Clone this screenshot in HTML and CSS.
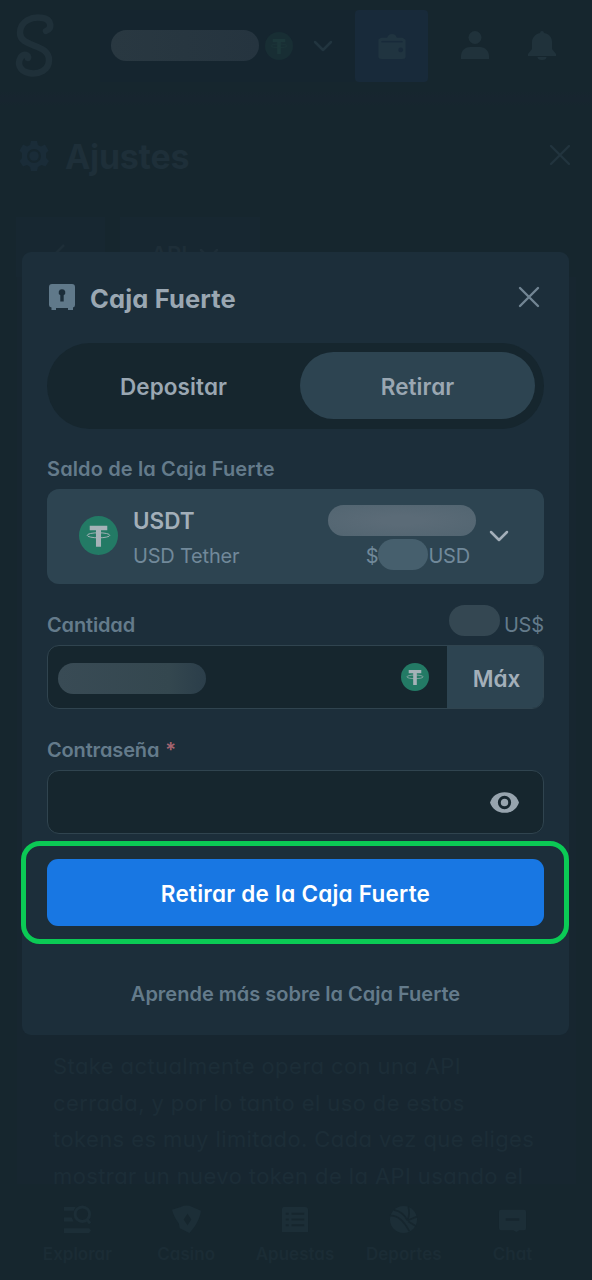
FILE: index.html
```html
<!DOCTYPE html>
<html lang="es">
<head>
<meta charset="utf-8">
<title>Caja Fuerte</title>
<link rel="stylesheet" href="styles.css">
</head>
<body>
<svg width="0" height="0" class="defs" aria-hidden="true">
  <symbol id="tether" viewBox="0 0 40 40">
    <circle cx="20" cy="20" r="20" fill="var(--coin)"/>
    <path d="M11 10h18v4.600h-6.400v17h-5.200v-17H11z" fill="var(--mark)"/>
    <ellipse cx="20" cy="19.800" rx="11.600" ry="2.600" fill="none" stroke="var(--mark)" stroke-width="1"/>
  </symbol>
  <symbol id="cross" viewBox="0 0 22 22"><path d="M2 2l18 18M20 2L2 20" fill="none" stroke="currentColor" stroke-width="2.400" stroke-linecap="round"/></symbol>
  <symbol id="chevron" viewBox="0 0 20 12"><path d="M2 2l8 8 8-8" fill="none" stroke="currentColor" stroke-width="2.500" stroke-linecap="round" stroke-linejoin="round"/></symbol>
</svg>
<div class="app">
  <header class="topbar">
    <svg class="logo" viewBox="0 0 40 64"><path d="M31 17C38 15 36 5 28 4C17 2 5 7 5 19C5 34 34 29 34 46C34 56 24 61 14 59C4 57 2 49 6 43C9 39 14 41 13 44" fill="none" stroke="currentColor" stroke-width="6.500" stroke-linecap="round"/></svg>
    <div class="balance">
      <span class="mask mask-top"></span>
      <svg class="coin-dim"><use href="#tether"/></svg>
      <svg class="chev-dim"><use href="#chevron"/></svg>
    </div>
    <div class="wallet"><svg viewBox="0 0 30 28"><path d="M1 6.500L4 5h6q1-4 5-4t5 4h6l3 2v18q0 2-3 2H4q-3 0-3-2z" fill="currentColor"/><path d="M4 9h22" stroke="#182a3a" stroke-width="1.500"/><circle cx="24" cy="17.500" r="2.500" fill="#182a3a"/></svg></div>
    <svg class="user" viewBox="0 0 28 28"><circle cx="14" cy="6.500" r="6.500" fill="currentColor"/><path d="M0 28v-3c0-6 5-9 9-9h10c5 0 9 4 9 9v3z" fill="currentColor"/></svg>
    <svg class="bell" viewBox="0 0 28 29"><path d="M12 2a2 2 0 0 1 4 0c6 1 8 5 8 9v7l4 5v2H0v-2l4-5v-7c0-4 3-8 8-9zM9.500 26h9a4.500 3 0 0 1-9 0z" fill="currentColor"/></svg>
  </header>
  <div class="settings">
    <svg class="gear" viewBox="0 0 30 30"><path d="M12 0h6l1 4 3 1.500 4-2 3.500 6L27 12v5l3 3-3.500 5.500-4-1.500-3.500 2-1 4h-6l-1-4-3-2-4 1.500L.5 20 3 17v-5L.5 9.500 4 3.500l4 2L11 4z" fill="currentColor"/><circle cx="15" cy="15" r="7" fill="#16262e"/><circle cx="15" cy="15" r="4.800" fill="currentColor"/></svg>
    <h1>Ajustes</h1>
    <svg class="settings-x"><use href="#cross"/></svg>
  </div>
  <div class="tabs"><div class="tab tab-back"><svg viewBox="0 0 12 20"><path d="M10 2l-8 8 8 8" fill="none" stroke="currentColor" stroke-width="2.500"/></svg></div><div class="tab tab-api"><span>API</span><svg><use href="#chevron"/></svg></div></div>
  <section class="panel">
    <p>Stake actualmente opera con una API<br>cerrada, y por lo tanto el uso de estos<br>tokens es muy limitado. Cada vez que eliges<br>mostrar un nuevo token de la API usando el</p>
  </section>
  <nav class="bottom">
    <div class="item"><svg viewBox="0 0 30 30"><path d="M1 2h12l-2 4H1zM1 13h8l2 4H1zM1 24h26l2 2.500-2 2.500H1z" fill="currentColor"/><circle cx="20" cy="9.500" r="7.500" fill="none" stroke="currentColor" stroke-width="3"/><path d="M24.500 14.500L28 19" stroke="currentColor" stroke-width="3"/></svg><span>Explorar</span></div>
    <div class="item"><svg viewBox="0 0 30 30"><path d="M0 5l9-3q6-3 12 0l9 4q-1 8-7 17l-5 6-10-5-1-5Q2 13 0 5z" fill="currentColor"/><path d="M16 9l4 6-4 6-4-6z" fill="#16262e"/></svg><span>Casino</span></div>
    <div class="item"><svg viewBox="0 0 30 30"><path d="M4 2h22q3 0 3 3v23H2V5q0-3 2-3z" fill="currentColor"/><path d="M6 9h3m3 0h13M6 15h3m3 0h13M6 21h3m3 0h13" stroke="#16262e" stroke-width="2"/></svg><span>Apuestas</span></div>
    <div class="item"><svg viewBox="0 0 30 30"><circle cx="15" cy="15" r="14" fill="currentColor"/><path d="M1 11q11-1 20 16M5 5q10 2 14 11M19 16q3-7 1-14M19 16l10-4M20 17l8 5" fill="none" stroke="#16262e" stroke-width="1.800"/></svg><span>Deportes</span></div>
    <div class="item"><svg viewBox="0 0 30 30"><path d="M3 5h24q2 0 2 2v17q0 2-2 2h-5l-3 2-3-2H3q-2 0-2-2V7q0-2 2-2z" fill="currentColor"/><path d="M8 15h14" stroke="#16262e" stroke-width="2.500"/></svg><span>Chat</span></div>
  </nav>
</div>

<main class="modal">
  <div class="modal-head">
    <svg class="safe" viewBox="0 0 26 26"><path d="M3 0h20q3 0 3 3v18q0 2-2 2.500V26h-5v-2H7v2H2.500v-2.500Q0 23 0 21V3q0-3 3-3z" fill="#60798a"/><path d="M13 5.200a3.200 3.200 0 0 1 1.700 6V17.500h-3.400v-6.300A3.200 3.200 0 0 1 13 5.200z" fill="#1c2e3a"/></svg>
    <h2>Caja Fuerte</h2>
    <svg class="close"><use href="#cross"/></svg>
  </div>
  <div class="switch"><div class="opt">Depositar</div><div class="opt active">Retirar</div></div>
  <div class="label l-saldo"><span>Saldo de la Caja Fuerte</span></div>
  <div class="currency">
    <svg class="coin"><use href="#tether"/></svg>
    <div class="names"><strong>USDT</strong><span>USD Tether</span></div>
    <div class="amounts"><span class="mask mask-amt"></span><div class="usd"><span>$</span><span class="mask mask-usd"></span><span>USD</span></div></div>
    <svg class="chev"><use href="#chevron"/></svg>
  </div>
  <div class="label l-cant"><span>Cantidad</span><div class="fiat"><span class="mask mask-fiat"></span><span>US$</span></div></div>
  <div class="field amount"><span class="mask mask-in"></span><svg class="coin-sm"><use href="#tether"/></svg><div class="max"><span>Máx</span></div></div>
  <div class="label l-pass"><span>Contraseña</span><span class="star">*</span></div>
  <div class="field pass"><svg viewBox="0 0 28 20"><path d="M14 0C21 0 26 4 28 10c-2 6-7 10-14 10S2 16 0 10C2 4 7 0 14 0z" fill="#97a4ae"/><circle cx="14" cy="10" r="5" fill="none" stroke="#16262e" stroke-width="2.800"/></svg></div>
  <div class="submit"><span>Retirar de la Caja Fuerte</span><div class="ring"></div></div>
  <div class="learn"><span>Aprende más sobre la Caja Fuerte</span></div>
</main>
</body>
</html>
```
FILE: styles.css
```css
* { box-sizing: border-box; }
body { margin: 0; width: 592px; height: 1280px; overflow: hidden; position: relative; background: #16262e; font-family: Inter, "Open Sans", sans-serif; font-feature-settings: "cv11"; color: #9aa7b2; --coin: #237a65; --mark: #a5b2b8; }
svg { display: block; flex: none; }
.defs { position: absolute; }
span, h1, h2, strong { white-space: nowrap; }
.mask { display: block; flex: none; height: 31px; border-radius: 16px; }

.app { height: 1280px; display: flex; flex-direction: column; }
.topbar { height: 105px; flex: none; display: flex; align-items: flex-start; color: #20313a; background: linear-gradient(#16262e 0 90px, #17252f 98px 102px, #16262e); }
.logo { width: 40px; height: 64px; margin: 14px 0 0 15px; color: #1f3039; }
.balance { width: 255px; height: 72px; margin: 10px 0 0 45px; padding-left: 11px; display: flex; align-items: center; background: #15252f; }
.mask-top { width: 148px; margin-top: -2px; background: linear-gradient(90deg, #293841, #25343f); }
.coin-dim { width: 28px; height: 28px; margin-left: 6px; --coin: #182e34; --mark: #1c373a; }
.chev-dim { width: 20px; height: 12px; margin-left: 20px; color: #22353f; }
.wallet { width: 73px; height: 72px; margin-top: 10px; padding: 23px 0 0 22px; background: #182a3a; border-radius: 4px; color: #203440; }
.wallet svg { width: 30px; height: 27px; }
.user { width: 28px; height: 28px; margin: 31px 0 0 33px; color: #20323b; }
.bell { width: 28px; height: 29px; margin: 31px 0 0 39px; color: #20323b; }
.settings { height: 112px; flex: none; display: flex; padding: 36px 21px 0 19px; color: #1d2e39; }
.gear { width: 30px; height: 30px; color: #1a2c38; }
.settings h1 { margin: -5px 0 0 16px; font-size: 34px; line-height: 42px; font-weight: 700; letter-spacing: -.3px; color: #1e2f39; }
.settings-x { width: 22px; height: 22px; margin: 3px 0 0 auto; color: #22343e; }
.tabs { height: 60px; flex: none; display: flex; gap: 15px; padding-left: 16px; }
.tab { height: 60px; background: #172731; display: flex; color: #1e2e38; }
.tab-back { width: 89px; padding: 26px 0 0 38px; }
.tab-back svg { width: 12px; height: 20px; }
.tab-api { width: 140px; padding: 24px 0 0 31px; gap: 12px; font-size: 22px; line-height: 26px; font-weight: 600; }
.tab-api svg { width: 20px; height: 12px; margin-top: 7px; }
.panel { flex: 1; margin: 0 16px 0 17px; padding: 771px 0 0 36px; background: linear-gradient(#172630, #172630) no-repeat 0 0 / 100% calc(100% - 12px); }
.panel p { margin: 0; font-size: 22px; line-height: 36.600px; letter-spacing: .4px; white-space: nowrap; color: #1c2d37; }
.bottom { height: 84px; flex: none; display: flex; padding: 9px 25px 0 23px; color: #1c2e37; }
.item { flex: 1; display: flex; flex-direction: column; align-items: center; font-size: 17px; line-height: 22px; font-weight: 600; }
.item svg { width: 29px; height: 29px; margin-bottom: 9px; }
.item span { color: #1b2c35; }

.modal { position: absolute; left: 22px; top: 252px; width: 547px; height: 783px; padding: 0 25px; display: flex; flex-direction: column; background: #1c2e3a; border-radius: 9px; }
.modal-head { height: 91px; flex: none; display: flex; padding: 32px 4px 0 2px; }
.safe { width: 26px; height: 26px; }
h2 { margin: -1px 0 0 15px; font-size: 25.500px; line-height: 31px; font-weight: 700; letter-spacing: .15px; }
.close { width: 22px; height: 22px; margin: 2px 0 0 auto; color: #718593; }
.switch { height: 86px; flex: none; display: flex; padding: 9px; border-radius: 43px; background: #16262e; }
.opt { width: 244px; height: 67px; padding: 2px 9px 0 0; display: flex; align-items: center; justify-content: center; border-radius: 34px; font-size: 22.500px; font-weight: 600; letter-spacing: .1px; }
.active { width: 235px; padding-right: 0; background: #2d4451; }
.label { flex: none; display: flex; align-items: flex-end; font-size: 20px; line-height: 24px; font-weight: 600; color: #647b8b; }
.l-saldo { height: 60px; padding-bottom: 8px; letter-spacing: .13px; }
.currency { height: 95px; flex: none; display: flex; padding-left: 32px; background: #2d4451; border-radius: 12px; }
.coin { width: 39px; height: 39px; margin-top: 27px; }
.names { width: 195px; margin: 17px 0 0 15px; display: flex; flex-direction: column; gap: 6px; }
strong { font-size: 22.500px; line-height: 29px; font-weight: 600; color: #a3afb9; }
.names > span, .usd { font-size: 20px; line-height: 30px; letter-spacing: -.2px; color: #71899a; }
.amounts { width: 148px; margin-top: 16px; display: flex; flex-direction: column; gap: 3px; }
.mask-amt { width: 148px; background: radial-gradient(ellipse at center, #5b6b77 20%, #526571 100%); }
.usd { display: flex; justify-content: flex-end; padding-right: 6px; }
.usd span:not(.mask) { padding-top: 2px; }
.mask-usd { width: 50px; background: #465f6d; }
.chev { width: 20px; height: 12px; margin: 41px 0 0 13px; color: #a3afb9; }
.l-cant { height: 61px; padding-bottom: 8px; justify-content: space-between; letter-spacing: -.15px; }
.fiat { display: flex; gap: 4px; font-weight: 400; height: 24px; }
.mask-fiat { width: 51px; margin-top: -8px; background: #344752; }
.field { height: 64px; flex: none; display: flex; background: #16262e; border: 1px solid #30444f; border-radius: 12px; overflow: hidden; }
.amount { padding-left: 10px; }
.mask-in { width: 148px; margin-top: 17px; background: linear-gradient(90deg, #394b55, #34474f 75%, #2b3e4a); }
.coin-sm { width: 28px; height: 28px; margin: 17px 18px 0 auto; }
.max { width: 97px; height: 64px; margin: -1px -1px 0 0; padding: 2px 0 0 2px; display: flex; align-items: center; justify-content: center; background: #2d4451; font-size: 22.500px; font-weight: 600; color: #a3afb9; }
.l-pass { height: 61px; padding-bottom: 8px; letter-spacing: -.15px; }
.star { margin-left: 6px; color: #a66570; }
.pass { padding: 21px 0 0 442px; }
.pass svg { width: 29px; height: 21px; }
.submit { position: relative; height: 67px; margin-top: 25px; flex: none; display: flex; align-items: center; justify-content: center; background: #1877e3; border-radius: 11px; color: #fff; font-size: 22.500px; font-weight: 600; letter-spacing: .24px; padding-top: 1px; }
.ring { position: absolute; inset: -18px -25px -18px -26px; border: 5px solid #0bca55; border-radius: 19px; }
.learn { margin-top: 56px; text-align: center; font-size: 20px; line-height: 24px; font-weight: 600; color: #647b8b; }
```
